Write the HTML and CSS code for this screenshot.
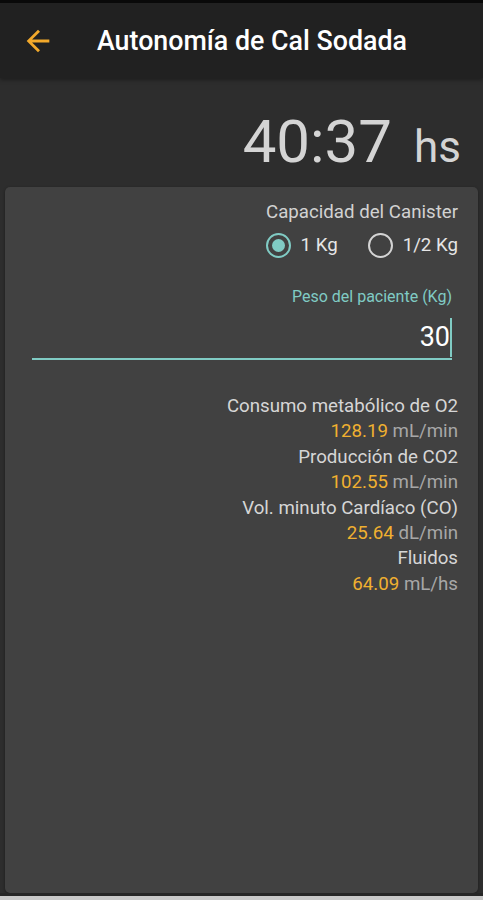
FILE: index.html
```html
<!DOCTYPE html>
<html lang="es">
<head>
<meta charset="utf-8">
<link rel="stylesheet" href="styles.css">
</head>
<body>
<div class="screen">
  <div class="status"></div>
  <header class="toolbar">
    <svg class="back" width="34" height="34" viewBox="0 0 24 24"><path d="M20 11H7.83l5.59-5.59L12 4l-8 8 8 8 1.41-1.41L7.83 13H20v-2z" fill="#f2a92b"/></svg>
    <h1 class="title">Autonomía de Cal Sodada</h1>
  </header>
  <div class="timer"><span class="time">40:37</span><span class="unit">hs</span></div>
  <main class="card">
    <div class="label">Capacidad del Canister</div>
    <div class="radios">
      <label class="radio"><span class="dot checked"></span>1 Kg</label>
      <label class="radio"><span class="dot"></span>1/2 Kg</label>
    </div>
    <div class="field">
      <div class="field-label">Peso del paciente (Kg)</div>
      <div class="field-input"><span class="val">30</span><span class="caret"></span></div>
    </div>
    <div class="results">
      <div class="r-label">Consumo metabólico de O2</div>
      <div class="r-val"><span class="num">128.19</span> mL/min</div>
      <div class="r-label">Producción de CO2</div>
      <div class="r-val"><span class="num">102.55</span> mL/min</div>
      <div class="r-label">Vol. minuto Cardíaco (CO)</div>
      <div class="r-val"><span class="num">25.64</span> dL/min</div>
      <div class="r-label">Fluidos</div>
      <div class="r-val"><span class="num">64.09</span> mL/hs</div>
    </div>
  </main>
  <div class="footer"></div>
</div>
</body>
</html>
```

FILE: styles.css
```css
* { box-sizing: border-box; margin: 0; padding: 0; }
html, body { width: 483px; height: 900px; overflow: hidden; background: #2d2d2d; }
body { font-family: Roboto, "Noto Sans", sans-serif; }
.screen { display: flex; flex-direction: column; height: 900px; }
.status { height: 3px; background: #0a0a0a; }
.toolbar { height: 75px; background: #212121; display: flex; align-items: center; padding-left: 21px; box-shadow: 0 2px 4px rgba(0,0,0,0.35); position: relative; z-index: 1; }
.back { display: block; }
.title { margin-left: 42px; font-size: 26.8px; font-weight: 500; color: #ffffff; letter-spacing: 0; }
.timer { height: 109px; display: flex; justify-content: flex-end; align-items: baseline; padding-right: 22px; padding-top: 34px; color: #d4d4d4; line-height: 1; }
.time { font-size: 60px; font-weight: 400; }
.unit { font-size: 44px; margin-left: 22px; }
.card { flex: 1; margin: 0 5px; background: #414141; border-radius: 5px; padding: 14px 20px 0 27px; display: flex; flex-direction: column; align-items: flex-end; box-shadow: 0 1px 3px rgba(0,0,0,0.4); }
.label { font-size: 18.7px; color: #d2d2d2; line-height: 22px; }
.radios { display: flex; gap: 30px; margin-top: 9px; }
.radio { display: flex; align-items: center; font-size: 18.7px; color: #e6e6e6; height: 26px; }
.dot { width: 25px; height: 25px; border-radius: 50%; border: 2.5px solid #d4d4d4; margin-right: 10px; display: flex; align-items: center; justify-content: center; }
.dot.checked { border-color: #80cbc4; }
.dot.checked::after { content: ""; width: 13px; height: 13px; border-radius: 50%; background: #80cbc4; }
.field { align-self: stretch; margin-top: 29px; display: flex; flex-direction: column; align-items: flex-end; padding-right: 6px; }
.field-label { font-size: 16px; color: #80cbc4; line-height: 20px; }
.field-input { align-self: stretch; display: flex; justify-content: flex-end; align-items: center; border-bottom: 2px solid #80cbc4; height: 44px; margin-top: 9px; }
.val { font-size: 27px; color: #ffffff; }
.caret { width: 2px; height: 39px; background: #80cbc4; }
.results { margin-top: 34px; text-align: right; font-size: 18.7px; line-height: 25.4px; }
.r-label { color: #d6d6d6; }
.r-val { color: #a7a7a7; }
.num { color: #f0b030; }
.footer { height: 7px; background: #c8c8c8; border-top: 3px solid #262626; }
```
